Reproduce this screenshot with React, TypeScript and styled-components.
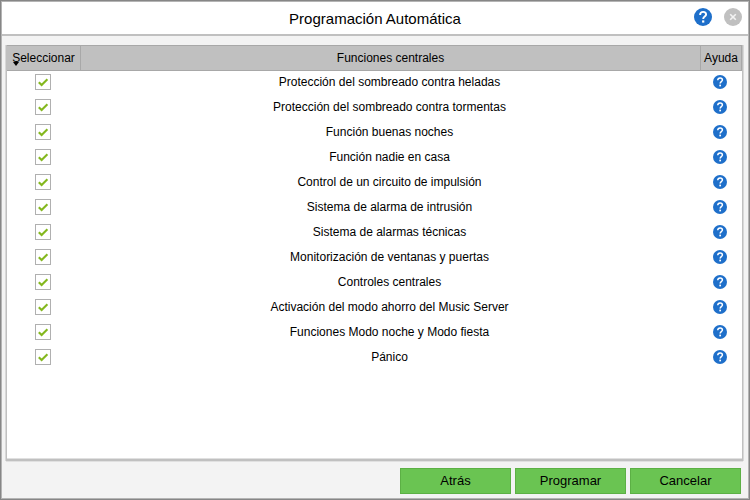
import React, { useState } from "react";
import styled, { createGlobalStyle } from "styled-components";

const GlobalStyle = createGlobalStyle`
  * { box-sizing: border-box; }
  body { margin: 0; background: #f3f3f3; }
  body, button { font-family: "Liberation Sans", Arial, sans-serif; color: #000; }
`;

const Dialog = styled.main`
  display: flex;
  flex-direction: column;
  min-height: 100vh;
  border: 1px solid #868686;
  box-shadow: inset 0 0 0 1px #b4b4b4;
  background: #f3f3f3;
`;

const TitleBar = styled.header`
  display: grid;
  grid-template-columns: 1fr auto 1fr;
  align-items: center;
  height: 34px;
  margin: 1px 1px 0;
  padding: 0 6px;
  background: #fff;
  border-bottom: 2px solid #c0c0c0;
`;

const Title = styled.h1`
  grid-column: 2;
  margin: 0;
  padding-top: 2px;
  font-size: 15px;
  line-height: 20px;
  font-weight: 400;
`;

const TitleActions = styled.div`
  display: flex;
  justify-content: flex-end;
  gap: 12px;
  padding-bottom: 2px;
`;

const IconButton = styled.button<{ $size: number }>`
  display: flex;
  width: ${(p) => p.$size}px;
  height: ${(p) => p.$size}px;
  margin: 0 auto;
  padding: 0;
  border: 0;
  background: none;
  cursor: pointer;

  ${TitleActions} & { margin: 0; }
  svg { width: 100%; height: 100%; }
`;

const Panel = styled.section`
  flex: 1;
  margin: 9px 6px 0 5px;
  background: #fff;
  border: 1px solid #c0c0c0;
  border-top: 0;
  border-bottom-width: 2px;
  box-shadow: 0 1px 0 #e0e0e0, 1px 0 0 #d8d8d8, -1px 0 0 #d8d8d8, inset 0 -1px 0 #e0e0e0;
`;

const Table = styled.table`
  width: 100%;
  table-layout: fixed;
  border-collapse: separate;
  border-spacing: 0;
  font-size: 12px;
  line-height: 16px;
  text-align: center;
`;

const HeadCell = styled.th<{ $width?: number }>`
  width: ${(p) => (p.$width ? `${p.$width}px` : "auto")};
  height: 26px;
  padding: 0;
  font-weight: 400;
  background: #c0c0c0;
  border: solid #a8a8a8;
  border-width: 1px 1px 1px 0;
`;

const SortLabel = styled.span`
  position: relative;
`;

const SortMark = styled.svg`
  position: absolute;
  left: 1px;
  bottom: -1px;
  width: 6px;
  height: 4px;
`;

const Cell = styled.td`
  height: 25px;
  padding: 0 3px 3px 0;
`;

const CheckLabel = styled.label`
  display: grid;
  place-items: center;
  width: 16px;
  height: 16px;
  margin: 0 auto;

  > * { grid-area: 1 / 1; }
  svg { width: 16px; height: 16px; pointer-events: none; }
  input:not(:checked) + svg { display: none; }
`;

const CheckBox = styled.input`
  appearance: none;
  width: 16px;
  height: 16px;
  margin: 0;
  background: #fff;
  border: 1px solid #b0b0b0;
`;

const Footer = styled.footer`
  display: flex;
  justify-content: flex-end;
  gap: 4px;
  padding: 7px 8px 5px;
`;

const ActionButton = styled.button`
  width: 111px;
  height: 26px;
  padding: 0;
  font-size: 13px;
  line-height: 16px;
  background: #6ac452;
  border: 1px solid #5cb045;
  cursor: pointer;
`;

const HelpIcon = () => (
  <svg viewBox="0 0 18 18" aria-hidden="true">
    <circle cx="9" cy="9" r="9" fill="#1e6fca" />
    <path d="M6.1 6.9C6.1 4.9 7.3 3.9 9.1 3.9s3 1.1 3 2.6c0 2-2.9 2.2-2.9 4.4" fill="none" stroke="#fff" strokeWidth="1.9" />
    <rect x="8.1" y="12.4" width="2.2" height="2.2" fill="#fff" />
  </svg>
);

const CloseIcon = () => (
  <svg viewBox="0 0 18 18" aria-hidden="true">
    <circle cx="9" cy="9" r="9" fill="#c0c0c0" />
    <path d="M6.2 6.2l5.6 5.6M11.8 6.2l-5.6 5.6" stroke="#f3f3f3" strokeWidth="1.6" />
  </svg>
);

const functions = [
  "Protección del sombreado contra heladas",
  "Protección del sombreado contra tormentas",
  "Función buenas noches",
  "Función nadie en casa",
  "Control de un circuito de impulsión",
  "Sistema de alarma de intrusión",
  "Sistema de alarmas técnicas",
  "Monitorización de ventanas y puertas",
  "Controles centrales",
  "Activación del modo ahorro del Music Server",
  "Funciones Modo noche y Modo fiesta",
  "Pánico",
];

function FunctionRow({ name }: { name: string }) {
  const [selected, setSelected] = useState(true);
  return (
    <tr>
      <Cell>
        <CheckLabel>
          <CheckBox
            type="checkbox"
            aria-label={name}
            checked={selected}
            onChange={(event) => setSelected(event.target.checked)}
          />
          <svg viewBox="0 0 16 16" aria-hidden="true">
            <path d="M3.8 8.2l2.8 2.8 5.8-5.8" fill="none" stroke="#84b81e" strokeWidth="2.1" />
          </svg>
        </CheckLabel>
      </Cell>
      <Cell>{name}</Cell>
      <Cell>
        <IconButton type="button" $size={14} aria-label={`Ayuda: ${name}`}>
          <HelpIcon />
        </IconButton>
      </Cell>
    </tr>
  );
}

export default function App() {
  return (
    <>
      <GlobalStyle />
      <Dialog>
        <TitleBar>
          <Title>Programación Automática</Title>
          <TitleActions>
            <IconButton type="button" $size={18} aria-label="Ayuda"><HelpIcon /></IconButton>
            <IconButton type="button" $size={18} aria-label="Cerrar"><CloseIcon /></IconButton>
          </TitleActions>
        </TitleBar>
        <Panel>
          <Table>
            <thead>
              <tr>
                <HeadCell $width={74}>
                  <SortLabel>
                    Seleccionar
                    <SortMark viewBox="0 0 6 4" aria-hidden="true"><path d="M0 0h6L3 4z" /></SortMark>
                  </SortLabel>
                </HeadCell>
                <HeadCell>Funciones centrales</HeadCell>
                <HeadCell $width={41}>Ayuda</HeadCell>
              </tr>
            </thead>
            <tbody>
              {functions.map((name) => <FunctionRow key={name} name={name} />)}
            </tbody>
          </Table>
        </Panel>
        <Footer>
          <ActionButton type="button">Atrás</ActionButton>
          <ActionButton type="button">Programar</ActionButton>
          <ActionButton type="button">Cancelar</ActionButton>
        </Footer>
      </Dialog>
    </>
  );
}
